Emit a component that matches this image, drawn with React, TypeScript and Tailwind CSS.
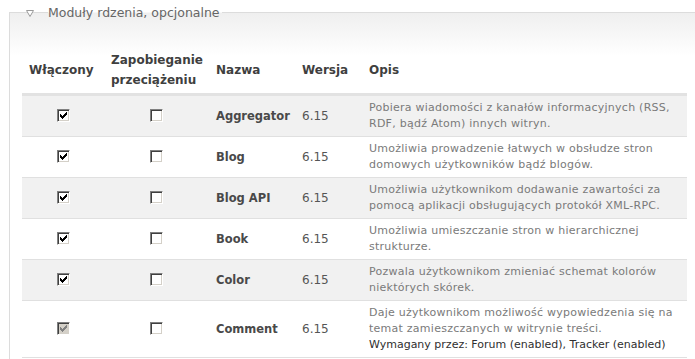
import React from "react";

type Row = { name: string; lines: string[]; req?: string; disabled?: boolean };

const rows: Row[] = [
  { name: "Aggregator", lines: ["Pobiera wiadomości z kanałów informacyjnych (RSS,", "RDF, bądź Atom) innych witryn."] },
  { name: "Blog", lines: ["Umożliwia prowadzenie łatwych w obsłudze stron", "domowych użytkowników bądź blogów."] },
  { name: "Blog API", lines: ["Umożliwia użytkownikom dodawanie zawartości za", "pomocą aplikacji obsługujących protokół XML-RPC."] },
  { name: "Book", lines: ["Umożliwia umieszczanie stron w hierarchicznej", "strukturze."] },
  { name: "Color", lines: ["Pozwala użytkownikom zmieniać schemat kolorów", "niektórych skórek."] },
  {
    name: "Comment",
    lines: ["Daje użytkownikom możliwość wypowiedzenia się na", "temat zamieszczanych w witrynie treści."],
    req: "Wymagany przez: Forum (enabled), Tracker (enabled)",
    disabled: true,
  },
];

function Check({ checked, disabled }: { checked: boolean; disabled?: boolean }) {
  return (
    <span
      className={`inline-flex items-center justify-center w-[13px] h-[13px] border border-t-[#808080] border-l-[#808080] border-r-[#ffffff] border-b-[#ffffff] shadow-[inset_1px_1px_0_#404040,inset_-1px_-1px_0_#d4d0c8] align-middle ${
        disabled ? "bg-[#d4d0c8]" : "bg-white"
      }`}
    >
      {checked && (
        <svg width="7" height="7" viewBox="0 0 7 7" shapeRendering="crispEdges">
          <path
            d="M6 0h1v3h-1z M5 1h1v3h-1z M4 2h1v3h-1z M3 3h1v3h-1z M2 4h1v3h-1z M1 3h1v3h-1z M0 2h1v3h-1z"
            fill={disabled ? "#808080" : "#000"}
          />
        </svg>
      )}
    </span>
  );
}

export default function App() {
  return (
    <div
      className="w-[695px] h-[359px] overflow-hidden bg-white text-[#494949]"
      style={{ fontFamily: '"DejaVu Sans", Verdana, sans-serif' }}
    >
      <div className="relative ml-[9px] w-[690px] bg-[linear-gradient(to_bottom,#ffffff_0px,#ffffff_12px,#efefef_13px,#ffffff_56px)]">
        {/* legend row */}
        <div className="flex items-start h-[25px]">
          <div className="w-[39px] h-[13px] mt-[12px] border-t border-l border-[#dcdcdc]" />
          <span className="mt-[5px] pr-[2px] text-[12.5px] leading-[16px] text-[#666] whitespace-nowrap">
            Moduły rdzenia, opcjonalne
          </span>
          <div className="flex-1 h-[13px] mt-[12px] border-t border-[#dcdcdc]" />
        </div>
        <svg className="absolute left-[17px] top-[10px]" width="8" height="7" viewBox="0 0 8 7">
          <path d="M0.5 0.5 L7.5 0.5 L4 6.5 Z" fill="#fff" stroke="#9a9a9a" strokeWidth="1" />
        </svg>
        {/* body */}
        <div className="border-l border-[#dcdcdc] pl-[12px] pr-[13px] pt-[22px] pb-[10px]">
          <table className="w-[665px] border-collapse table-fixed">
            <colgroup>
              <col className="w-[82px]" />
              <col className="w-[105px]" />
              <col className="w-[86px]" />
              <col className="w-[67px]" />
              <col className="w-[325px]" />
            </colgroup>
            <thead>
              <tr className="border-b-[3px] border-[#e2e2e2]">
                {["Włączony", "Zapobieganie|przeciążeniu", "Nazwa", "Wersja", "Opis"].map((h) => (
                  <th
                    key={h}
                    className="px-[7px] py-[3px] text-left align-middle text-[12px] leading-[20px] font-bold text-[#3f3f3f] whitespace-nowrap"
                  >
                    {h.split("|").map((p, i) => (
                      <div key={i}>{p}</div>
                    ))}
                  </th>
                ))}
              </tr>
            </thead>
            <tbody>
              {rows.map((r, i) => (
                <tr
                  key={r.name}
                  className={`border-b border-[#e0e0e0] ${i % 2 === 0 ? "bg-[#f1f1f1]" : "bg-white"}`}
                >
                  <td className="px-[7px] py-[4px] align-middle text-center">
                    <span className="relative top-[-1px]">
                      <Check checked disabled={r.disabled} />
                    </span>
                  </td>
                  <td className="px-[7px] py-[4px] align-middle text-center">
                    <span className="relative top-[-1px]">
                      <Check checked={false} />
                    </span>
                  </td>
                  <td className="px-[7px] py-[4px] align-middle text-[11.5px] font-bold leading-[16px] whitespace-nowrap text-[#494949]">
                    {r.name}
                  </td>
                  <td className="px-[7px] py-[4px] align-middle text-[12px] leading-[16px] text-[#555]">6.15</td>
                  <td className="px-[7px] py-[4px] align-middle text-[11px] leading-[16px] whitespace-nowrap">
                    {r.lines.map((l) => (
                      <div key={l} className="text-[#7a7a7a] tracking-[0.25px]">
                        {l}
                      </div>
                    ))}
                    {r.req && <div className="text-[#2f2f2f]">{r.req}</div>}
                  </td>
                </tr>
              ))}
            </tbody>
          </table>
        </div>
      </div>
    </div>
  );
}
